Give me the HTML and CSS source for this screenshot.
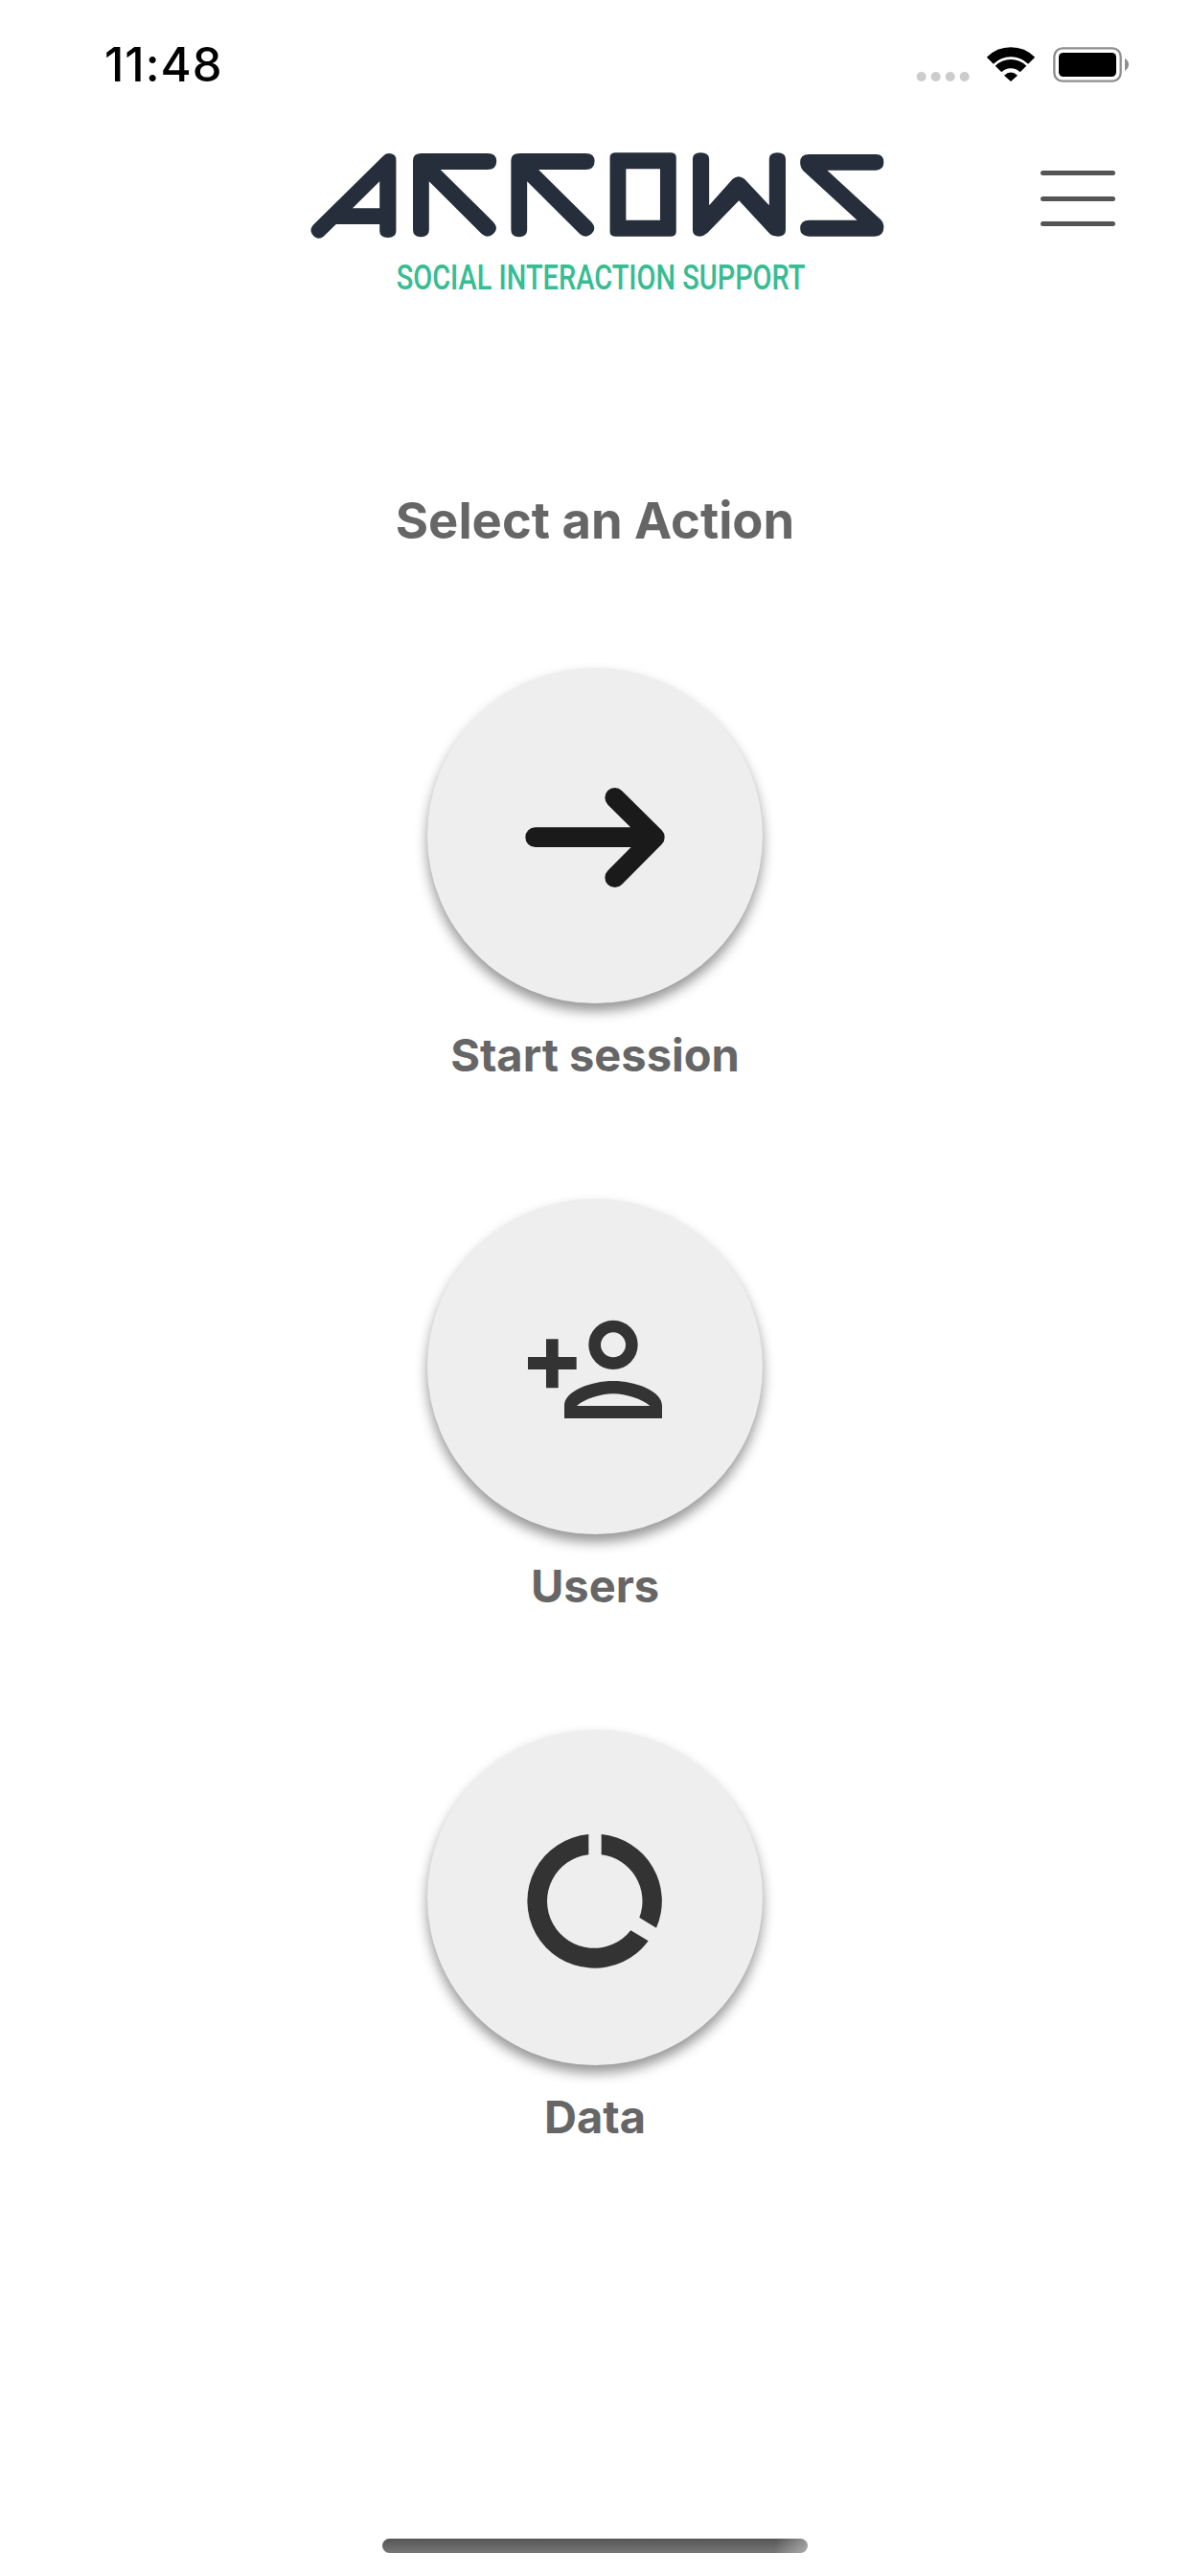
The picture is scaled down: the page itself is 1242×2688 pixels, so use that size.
FILE: index.html
```html
<!DOCTYPE html>
<html lang="en">
<head>
<meta charset="utf-8">
<title>Arrows</title>
<link rel="stylesheet" href="styles.css">
</head>
<body>
<div class="screen">
  <div class="status">
    <span class="time">11:48</span>
    <svg class="status-icons" viewBox="108 81 669 126">
      <g class="dots"><circle cx="125" cy="180" r="15"/><circle cx="170" cy="180" r="15"/><circle cx="215" cy="180" r="15"/><circle cx="260" cy="180" r="15"/></g>
      <path class="wifi-arc" d="M340 130A92 92 0 0 1 470 130" stroke-width="30"/>
      <path class="wifi-arc" d="M366 156A55 55 0 0 1 444 156" stroke-width="28"/>
      <path d="M405 195L384 176Q405 157 426 176Z"/>
      <rect class="batt-frame" x="541" y="91" width="208" height="103" rx="26"/>
      <rect x="555" y="105" width="180" height="75" rx="14"/>
      <path class="batt-nub" d="M762 122Q774 130 774 142Q774 154 762 162Z"/>
    </svg>
  </div>
  <header class="header">
    <svg class="logo" viewBox="0 0 1568 570" preserveAspectRatio="none" role="img" aria-label="Arrows logo">
      <g class="logo-mark">
        <path fill-rule="evenodd" d="M243 100Q250 90 258 90Q277 90 277 110V333Q277 354 256 354Q235 354 235 333V312H124L92 350Q80 362 68 350Q53 333 65 315ZM235 178V262H166Z"/>
        <path d="M320 112Q320 90 342 90H510Q533 90 533 115Q533 141 510 141H390L525 305Q540 325 525 342Q510 358 495 342L361 178V330Q361 352 340 352Q320 352 320 330Z"/>
        <path d="M570 112Q570 90 592 90H760Q783 90 783 115Q783 141 760 141H640L775 305Q790 325 775 342Q760 358 745 342L611 178V330Q611 352 590 352Q570 352 570 330Z"/>
        <path fill-rule="evenodd" d="M837 88H976Q991 88 991 103V335Q991 350 976 350H837Q822 350 822 335V103Q822 88 837 88ZM863 139V299H950V139Z"/>
        <path d="M1033 108Q1033 88 1053 88Q1075 88 1075 108V253L1135 170Q1150 155 1165 170L1228 253V108Q1228 88 1249 88Q1270 88 1270 108V330Q1270 350 1250 350Q1235 350 1228 340L1151 238L1070 340Q1060 350 1052 350Q1033 350 1033 330Z"/>
        <path d="M1330 93H1500Q1520 93 1520 118Q1520 143 1500 143H1376L1510 295Q1520 305 1520 322Q1520 350 1497 350H1330Q1307 350 1307 325Q1307 299 1330 299H1452L1315 145Q1307 135 1307 118Q1307 93 1330 93Z"/>
      </g>
      <g transform="scale(0.6 1)">
        <text class="logo-tag" x="463" y="517" textLength="1737" lengthAdjust="spacingAndGlyphs">SOCIAL INTERACTION SUPPORT</text>
      </g>
    </svg>
    <button class="menu" aria-label="Menu"><span></span><span></span><span></span></button>
  </header>
  <main class="main">
    <h1 class="title">Select an Action</h1>
    <div class="action">
      <div class="disc">
        <svg class="icon" viewBox="303 276 600 600">
          <path class="arrow" d="M416 581H790M665 457L790 581L665 707"/>
        </svg>
      </div>
      <div class="label">Start session</div>
    </div>
    <div class="action">
      <div class="disc">
        <svg class="icon" viewBox="3 -42 600 600">
          <path class="glyph" d="M150 172H188V228H245V267H188V325H150V267H93V228H150Z"/>
          <circle class="head" cx="360" cy="190" r="58"/>
          <path class="glyph" fill-rule="evenodd" d="M207 420V380C207 335 290 303 360 303S513 335 513 380V420ZM246 381H475C450 360 400 343 360 343S270 360 246 381Z"/>
        </svg>
      </div>
      <div class="label">Users</div>
    </div>
    <div class="action">
      <div class="disc">
        <svg class="icon" viewBox="3 -60 600 600">
          <path class="glyph" d="M283 42A210 210 0 1 0 470 376L415 343A147 147 0 1 1 283 105.4Z"/>
          <path class="glyph" d="M323 42A210 210 0 0 1 495 335L442 303A147 147 0 0 0 323 105.4Z"/>
        </svg>
      </div>
      <div class="label">Data</div>
    </div>
  </main>
  <div class="home-bar"></div>
</div>
</body>
</html>
```
FILE: styles.css
```css
* { box-sizing: border-box; }
html, body { margin: 0; padding: 0; background: #fff; }
.screen {
  width: 1242px;
  height: 2688px;
  display: flex;
  flex-direction: column;
  overflow: hidden;
  font-family: Inter, "Liberation Sans", sans-serif;
}
.status {
  height: 130px;
  flex: none;
  display: flex;
  justify-content: space-between;
  align-items: flex-start;
  padding: 0 63px 0 109px;
}
.time {
  margin-top: 38px;
  font-size: 49px;
  line-height: 60px;
  font-weight: 500;
  letter-spacing: 1px;
  color: #000;
}
.status-icons { width: 223px; height: 42px; margin-top: 47px; }
.dots { fill: #ccc; }
.wifi-arc { fill: none; stroke: #000; }
.batt-frame { fill: none; stroke: #8e8e8e; stroke-width: 7; }
.batt-nub { fill: #8e8e8e; }
.header {
  height: 190px;
  flex: none;
  display: flex;
  align-items: flex-start;
  padding-left: 300px;
}
.logo { width: 642px; height: 190px; flex: none; }
.logo-mark { fill: #262e3b; }
.logo-tag {
  font-family: Roboto, sans-serif;
  font-size: 110px;
  font-weight: 500;
  fill: #37bc93;
}
.menu {
  width: 78px;
  margin: 48px 0 0 144px;
  padding: 0;
  border: 0;
  background: none;
  display: flex;
  flex-direction: column;
  gap: 21.5px;
}
.menu span { display: block; height: 5px; border-radius: 3px; background: #555; }
.main { flex: none; display: flex; flex-direction: column; align-items: center; }
.title {
  margin: 193px 0 124px;
  font-size: 52.5px;
  line-height: 60px;
  font-weight: 700;
  color: #666;
}
.action { display: flex; flex-direction: column; align-items: center; margin-bottom: 120px; }
.disc {
  width: 350px;
  height: 350px;
  border-radius: 50%;
  background: #eee;
  box-shadow: 0 8px 13px rgba(0, 0, 0, 0.42);
  display: flex;
  align-items: center;
  justify-content: center;
}
.icon { width: 200px; height: 200px; }
.arrow { fill: none; stroke: #1a1a1a; stroke-width: 62; stroke-linecap: round; stroke-linejoin: round; }
.glyph { fill: #333; }
.head { fill: none; stroke: #333; stroke-width: 38; }
.label {
  margin-top: 24px;
  font-size: 47px;
  line-height: 60px;
  font-weight: 700;
  color: #666;
}
.home-bar {
  width: 444px;
  height: 15px;
  margin: auto auto 24px;
  border-radius: 8px;
  background: linear-gradient(100deg, transparent 92%, rgba(255, 255, 255, 0.4) 100%), linear-gradient(#555, #777);
}
```
